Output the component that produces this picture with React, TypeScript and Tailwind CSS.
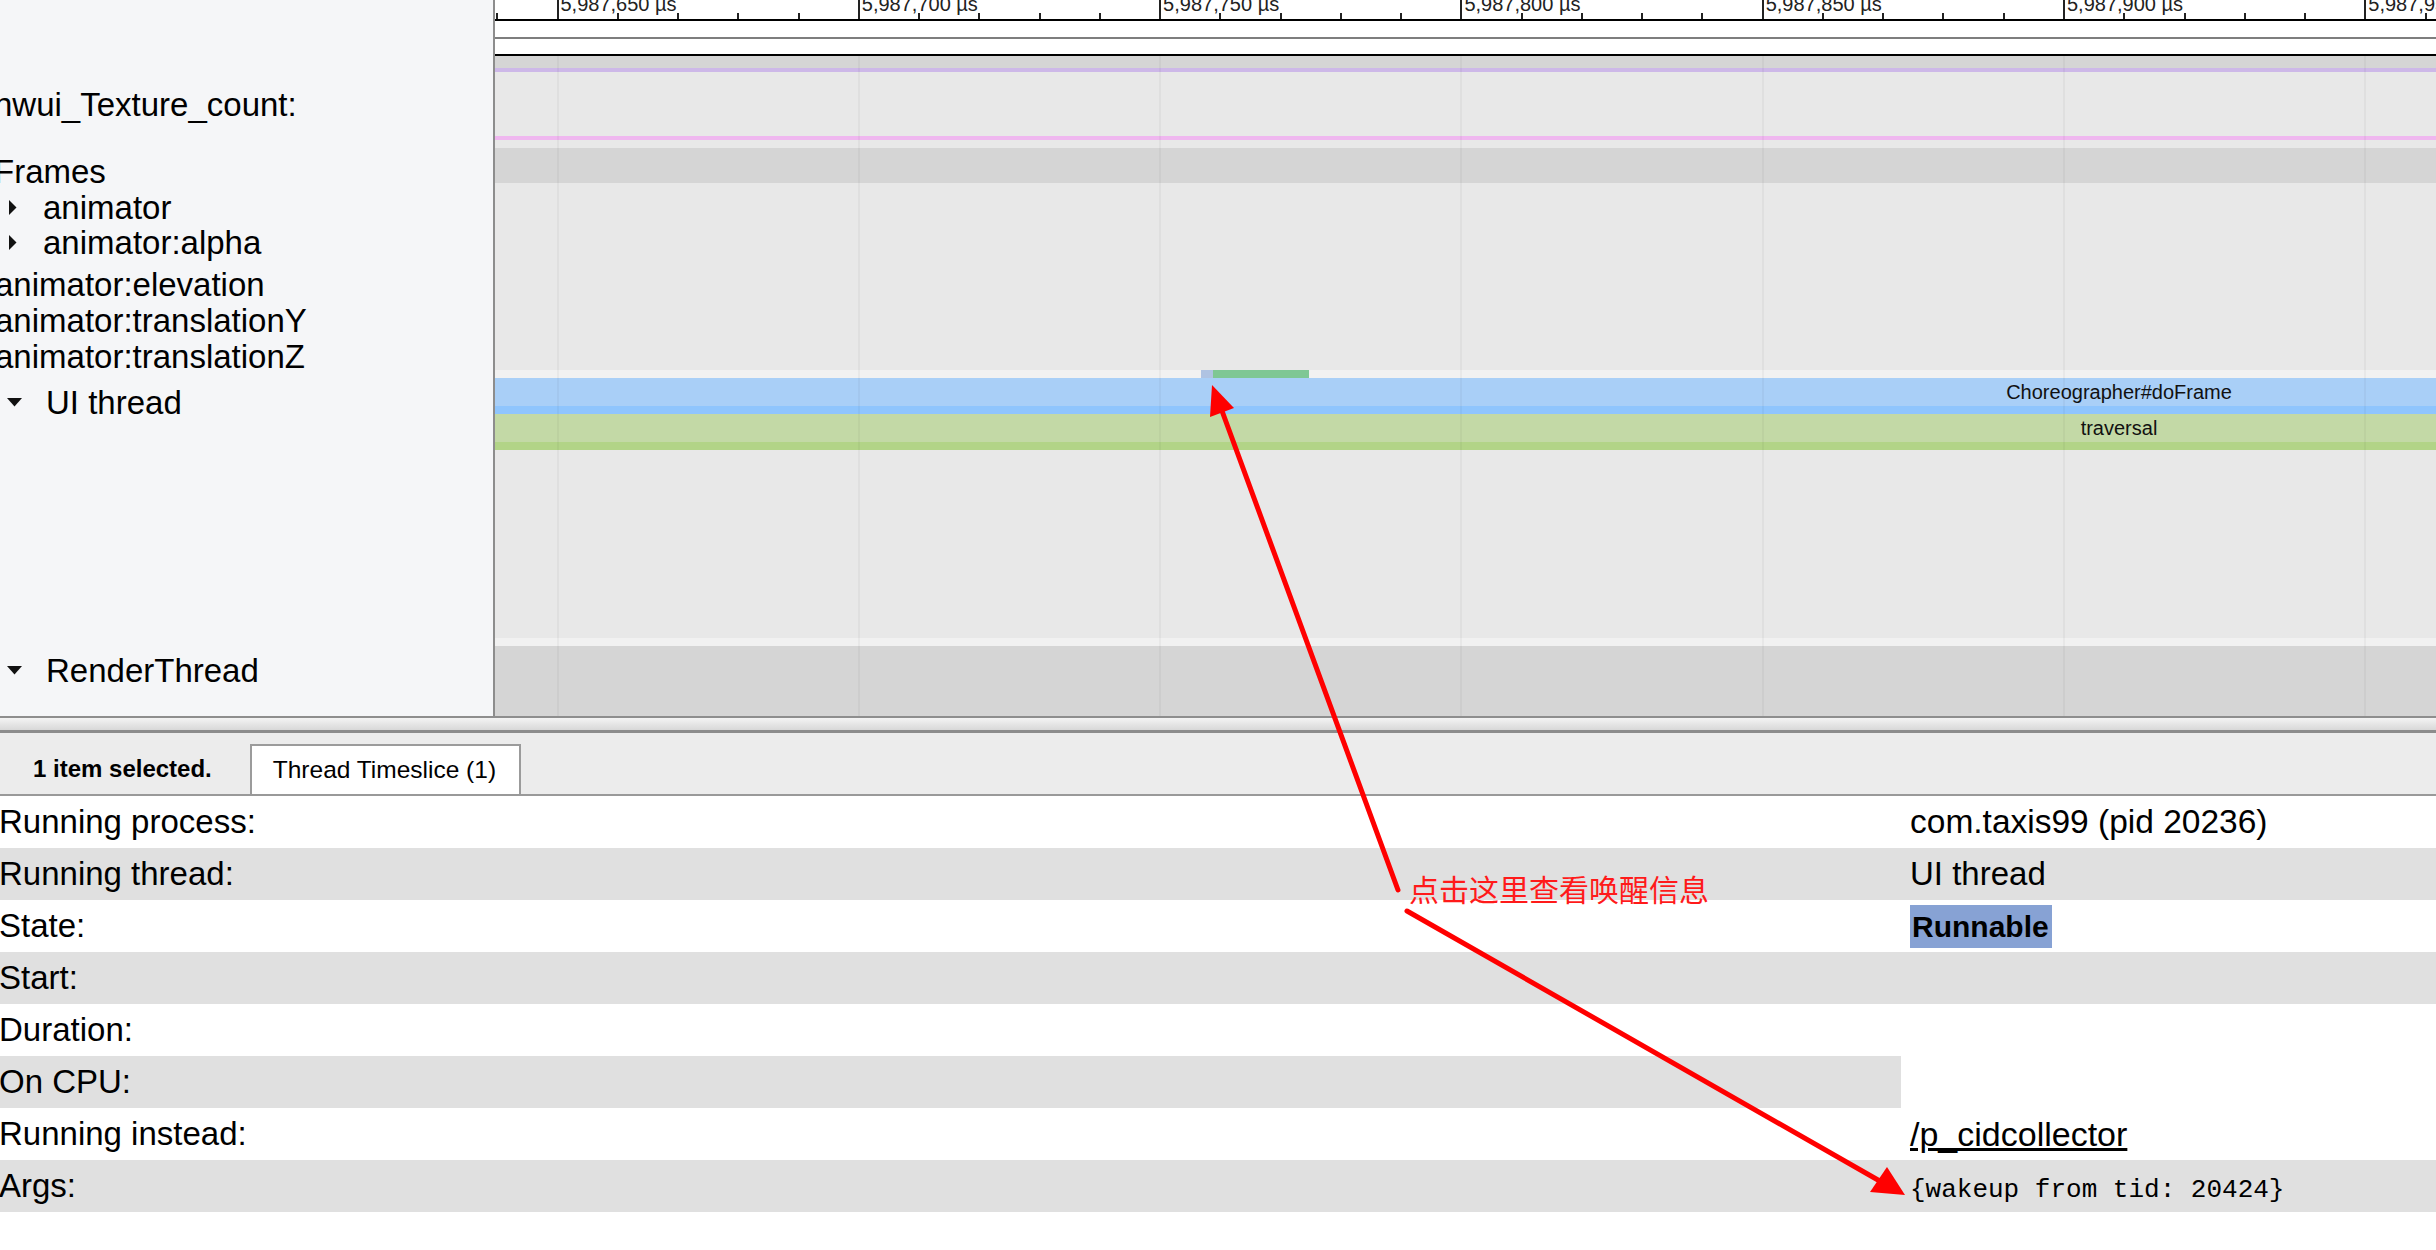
import { FC } from "react";

const TRACK_W = 1941;
const FIRST_MAJOR = 61.5;
const MAJOR = 301.3;
const MINOR = MAJOR / 5;
const LABELS = ["5,987,650", "5,987,700", "5,987,750", "5,987,800", "5,987,850", "5,987,900", "5,987,950"];

const ticks: { x: number; major: number }[] = [];
for (let k = -1; k < 40; k++) {
  const x = FIRST_MAJOR + k * MINOR;
  if (x > TRACK_W) break;
  ticks.push({ x, major: k % 5 === 0 ? k / 5 : -1 });
}
const majors = ticks.filter((t) => t.major >= 0);

const RightTri: FC = () => (
  <svg width="8" height="15" viewBox="0 0 8 15" className="ml-[9px] mr-[26px] shrink-0">
    <path d="M0 0 L7.5 7.5 L0 15 Z" fill="#111" />
  </svg>
);

const DownTri: FC = () => (
  <svg width="15" height="9" viewBox="0 0 15 9" className="ml-[7px] mr-[24px] shrink-0">
    <path d="M0 0 L15 0 L7.5 8.5 Z" fill="#111" />
  </svg>
);

const LeftLabels: FC = () => (
  <div className="w-[495px] shrink-0 bg-[#f5f6f8] border-r-2 border-[#8d8d8d] overflow-hidden text-[33px] leading-none whitespace-nowrap">
    <div className="h-[36px] mt-[86px] flex items-center -ml-[6px]">hwui_Texture_count:</div>
    <div className="h-[36px] mt-[31px] flex items-center -ml-[6px]">Frames</div>
    <div className="h-[36px] flex items-center">
      <RightTri />
      <span>animator</span>
    </div>
    <div className="h-[35px] flex items-center">
      <RightTri />
      <span>animator:alpha</span>
    </div>
    <div className="h-[36px] mt-[6px] flex items-center -ml-[5px]">animator:elevation</div>
    <div className="h-[36px] flex items-center -ml-[5px]">animator:translationY</div>
    <div className="h-[36px] flex items-center -ml-[5px]">animator:translationZ</div>
    <div className="h-[36px] mt-[10px] flex items-center">
      <DownTri />
      <span>UI thread</span>
    </div>
    <div className="h-[36px] mt-[232px] flex items-center">
      <DownTri />
      <span>RenderThread</span>
    </div>
  </div>
);

const Ruler: FC = () => (
  <div className="relative h-[21px] bg-white border-b-2 border-black overflow-hidden">
    {ticks.map((t, i) =>
      t.major >= 0 ? (
        <div key={i}>
          <div className="absolute top-0 bottom-0 w-[2px] bg-[#222]" style={{ left: t.x }} />
          <span
            className="absolute top-[-6px] text-[20px] leading-[20px] text-[#222] whitespace-nowrap"
            style={{ left: t.x + 4 }}
          >
            {LABELS[t.major]} µs
          </span>
        </div>
      ) : (
        <div key={i} className="absolute bottom-0 h-[6px] w-[2px] bg-[#222]" style={{ left: t.x }} />
      )
    )}
  </div>
);

const Tracks: FC = () => (
  <div className="flex-1 flex flex-col overflow-hidden">
    <Ruler />
    <div className="h-[16px] bg-white" />
    <div className="h-[2px] bg-[#7e7e7e]" />
    <div className="h-[15px] bg-white" />
    <div className="h-[2px] bg-black" />
    <div className="relative flex flex-col">
      <div className="h-[12px] bg-[#d5d5d5]" />
      <div className="h-[4px] bg-[#cdb8e8]" />
      <div className="h-[64px] bg-[#e8e8e8]" />
      <div className="h-[4px] bg-[#efb7ef]" />
      <div className="h-[8px] bg-[#e8e8e8]" />
      <div className="h-[35px] bg-[#d5d5d5]" />
      <div className="h-[187px] bg-[#e8e8e8]" />
      <div className="h-[8px] bg-[#f1f1f1] flex">
        <div className="ml-[706px] w-[12px] bg-[#afc3e2]" />
        <div className="w-[96px] bg-[#7fc794]" />
      </div>
      <div className="h-[28px] bg-[#a9cff7] flex items-center pl-[1324px] text-[20px] text-[#111]">
        <div className="w-[600px] text-center">Choreographer#doFrame</div>
      </div>
      <div className="h-[8px] bg-[#8fc5fd]" />
      <div className="h-[28px] bg-[#c3d9a6] flex items-center pl-[1324px] text-[20px] text-[#111]">
        <div className="w-[600px] text-center">traversal</div>
      </div>
      <div className="h-[8px] bg-[#b2d487]" />
      <div className="h-[188px] bg-[#e8e8e8]" />
      <div className="h-[8px] bg-[#f1f1f1]" />
      <div className="h-[70px] bg-[#d5d5d5]" />
      {majors.map((t, i) => (
        <div
          key={i}
          className="absolute top-0 bottom-0 w-[2px] bg-[rgba(0,0,0,0.035)] pointer-events-none"
          style={{ left: t.x }}
        />
      ))}
    </div>
  </div>
);

const rows: { label: string; value?: React.ReactNode; gray: boolean; partial?: boolean }[] = [
  { label: "Running process:", value: <span className="text-[33.5px]">com.taxis99 (pid 20236)</span>, gray: false },
  { label: "Running thread:", value: "UI thread", gray: true },
  {
    label: "State:",
    value: (
      <span className="inline-block h-[43px] leading-[43px] w-[142px] pl-[2px] text-[30px] font-bold bg-[#87a2d4]">
        Runnable
      </span>
    ),
    gray: false,
  },
  { label: "Start:", gray: true },
  { label: "Duration:", gray: false },
  { label: "On CPU:", gray: true, partial: true },
  { label: "Running instead:", value: <span className="underline text-[34px]">/p_cidcollector</span>, gray: false },
  {
    label: "Args:",
    value: <span className="font-['Liberation_Mono',monospace] text-[26px]">{"{wakeup from tid: 20424}"}</span>,
    gray: true,
  },
];

const Details: FC = () => (
  <div className="flex flex-col">
    {rows.map((r) => (
      <div
        key={r.label}
        className={`h-[52px] flex items-center text-[33px] whitespace-nowrap ${r.gray && !r.partial ? "bg-[#e0e0e0]" : ""}`}
      >
        <div className={`w-[1902px] h-full flex items-center -ml-[1px] ${r.partial ? "bg-[#e0e0e0]" : ""}`}>
          {r.label}
        </div>
        <div className="ml-[9px]">{r.value}</div>
      </div>
    ))}
  </div>
);

const Annotations: FC = () => (
  <>
    <svg width="2436" height="1250" className="absolute left-0 top-0 pointer-events-none">
      <g stroke="#ff0000" strokeWidth="5" strokeLinecap="round" fill="none">
        <line x1="1398" y1="890" x2="1218" y2="400" />
        <line x1="1407" y1="911" x2="1885" y2="1184" />
      </g>
      <g fill="#ff0000">
        <path d="M1212 385 L1210 417 L1234 408 Z" />
        <path d="M1905 1195 L1887 1167 L1870 1192 Z" />
      </g>
    </svg>
    <div className="absolute left-[1409px] top-[873px] text-[30px] leading-none text-[#ff1a1a] font-['Noto_Sans_CJK_SC',sans-serif] whitespace-nowrap">
      点击这里查看唤醒信息
    </div>
  </>
);

const App: FC = () => {
  return (
    <div className="relative w-[2436px] h-[1250px] overflow-hidden bg-white text-black font-['Liberation_Sans',Arial,sans-serif]">
      <div className="flex h-[718px] border-b-2 border-[#8e8e8e]">
        <LeftLabels />
        <Tracks />
      </div>
      <div className="h-[12px] bg-gradient-to-b from-[#f4f4f4] to-[#d8d8d8]" />
      <div className="h-[3px] bg-[#8c8c8c]" />
      <div className="h-[63px] bg-[#ececec] border-b-2 border-[#999] flex items-end">
        <div className="h-[50px] flex items-center pl-[33px] pr-[38px] text-[24px] font-bold">1 item selected.</div>
        <div className="h-[50px] bg-white border-2 border-b-0 border-[#9b9b9b] flex items-center pl-[21px] pr-[23px] text-[24.5px]">
          Thread Timeslice (1)
        </div>
      </div>
      <Details />
      <Annotations />
    </div>
  );
};

export default App;
